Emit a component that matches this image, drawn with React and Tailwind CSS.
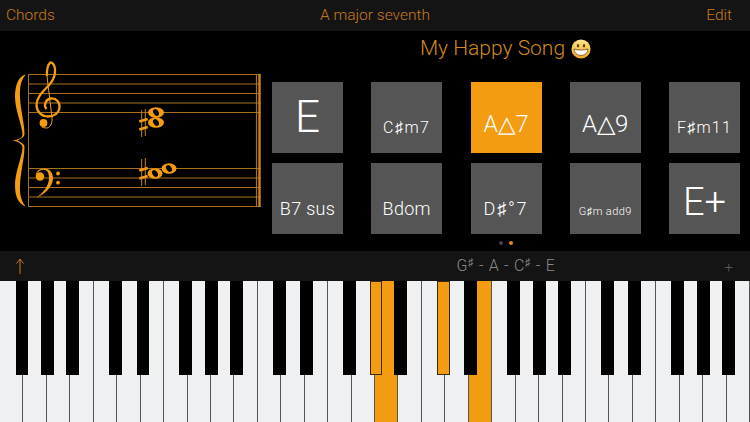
const WHITE_KEYS = Array.from({ length: 32 }, (_, i) => i);
const BLACK_KEYS = [
  [15.5, 0], [41, 0], [66, 0], [109, 0], [136.5, 0], [179, 0], [205, 0], [230, 0], [273, 0], [300, 0], [343, 0],
  [369.5, 1], [394, 0], [437, 1], [464, 0], [507, 0], [533, 0], [558, 0], [601, 0], [628, 0], [671, 0], [697, 0], [722, 0],
];

const CHORDS = [
  { id: 'e', label: 'E', cls: 'text-[44px] pb-[14px]' },
  { id: 'csm7', label: 'C♯m7', cls: 'text-[16px] tracking-[1.500px] pb-[17px]' },
  { id: 'a7', label: 'A△7', cls: 'text-[23px] pb-[17px]', on: true },
  { id: 'a9', label: 'A△9', cls: 'text-[24px] pb-[17px]' },
  { id: 'fsm11', label: 'F♯m11', cls: 'text-[16px] tracking-[1.200px] pb-[17px]' },
  { id: 'b7', label: 'B7 sus', cls: 'text-[18px] tracking-[0.300px] pb-[16px]' },
  { id: 'bdom', label: 'Bdom', cls: 'text-[18px] tracking-[0.300px] pb-[16px]' },
  { id: 'ds7', label: 'D♯°7', cls: 'text-[18px] tracking-[1.800px] pb-[16px]' },
  { id: 'gsm', label: 'G♯m add9', cls: 'text-[11px] tracking-[0.400px] pb-[17px] text-[#d8d8d8]' },
  { id: 'ep', label: 'E+', cls: 'text-[38px] pb-[13px]' },
];

const ORANGE = '#f39c12';

const Sharp = ({ x, y }) => (
  <g transform={`translate(${x} ${y})`} fill="none">
    <path d="M-1.8 -14V13M1.8 -15V12" stroke="#c58319" strokeWidth="1" />
    <path d="M-4.2 -2.400L4.200 -5M-4.200 5.500L4.200 2.900" stroke={ORANGE} strokeWidth="2.600" />
  </g>
);

const Note = ({ x, y, rx = 7.500, ry = 5.200 }) => (
  <g transform={`translate(${x} ${y})`}>
    <ellipse rx={rx} ry={ry} fill={ORANGE} />
    <ellipse rx="2.500" ry="3.700" fill="#000" transform="rotate(-35)" />
  </g>
);

const Staff = () => {
  const lines = [74.500, 84, 93.500, 103, 112.500, 168.500, 178, 187.500, 197, 206.500];
  return (
    <svg width="272" height="170" viewBox="0 50 272 170" className="shrink-0">
      {lines.map((y) => (
        <line key={y} x1="28" x2="261" y1={y} y2={y} stroke="#a9701c" strokeWidth="1.200" />
      ))}
      <line x1="28.500" x2="28.500" y1="74" y2="207" stroke="#a9701c" strokeWidth="1" />
      <line x1="256.500" x2="256.500" y1="74" y2="207" stroke="#a9701c" strokeWidth="1.200" />
      <line x1="259.500" x2="259.500" y1="74" y2="207" stroke="#c98518" strokeWidth="2.400" />
      {/* brace */}
      <path
        d="M26 74.500C19 76 15 84 15 97C15 110 22 125 22.500 134C22.500 138 19 140 12 140.500C19 141.500 22.500 144 22.500 148C22 157 15 172 15 185C15 198 19 204 26 206.500C21.500 202 19.500 195 20 185C20.500 172 24.500 158 24.500 147C24.500 144 21 142 17 140.500C21 139 24.500 137 24.500 134C24.500 123 20.500 110 20 97C19.500 86 21.500 79 26 74.500Z"
        fill={ORANGE}
      />
      {/* treble clef */}
      <path
        d="M46.500 109C43 105 46 99 51 98.500C56.500 98 60 102.500 59.500 107.500C59 113 54 116.500 48 116.500C41 116.500 36.500 111 36.500 105C36.500 96 45 90 50 84C54 79 55.500 74 55 69C54.700 65 52.500 62.500 50.500 62.500C48 64 46.500 70 47 76"
        fill="none"
        stroke={ORANGE}
        strokeWidth="2.300"
      />
      <path
        d="M47 76L52 118C52.500 124 50 128 46 128C44.500 128 43 127.500 42 127"
        fill="none"
        stroke={ORANGE}
        strokeWidth="1"
      />
      <circle cx="43.500" cy="123" r="3.900" fill={ORANGE} />
      {/* bass clef */}
      <path
        d="M35.800 176C35.500 171.500 39.500 168.500 44 168.500C49.500 168.500 53 172.500 53 178C53 186.500 45 194 36 198C43 193 49 186 49 178C49 172.500 47 169.700 43.500 169.700C40 169.700 37 172 35.800 176Z"
        fill={ORANGE}
      />
      <circle cx="40" cy="176.500" r="4.200" fill={ORANGE} />
      <circle cx="58" cy="173.500" r="1.900" fill={ORANGE} />
      <circle cx="58" cy="182.700" r="1.900" fill={ORANGE} />
      <Sharp x={143.500} y={124} />
      <Note x={156} y={112.500} rx={8} />
      <Note x={156} y={122.500} rx={8} />
      <Sharp x={143.500} y={173} />
      <Note x={155} y={173.500} />
      <Note x={169} y={168.500} />
    </svg>
  );
};

const Grin = () => (
  <svg width="20" height="20" viewBox="0 0 22 22" className="ml-[6px]">
    <defs>
      <linearGradient id="face" x1="0" y1="0" x2="0" y2="1">
        <stop offset="0" stopColor="#fde68a" />
        <stop offset="1" stopColor="#eea520" />
      </linearGradient>
    </defs>
    <circle cx="11" cy="11" r="10.500" fill="url(#face)" />
    <ellipse cx="7.700" cy="7.500" rx="1.300" ry="1.900" fill="#5b3a10" />
    <ellipse cx="14.300" cy="7.500" rx="1.300" ry="1.900" fill="#5b3a10" />
    <path d="M3.500 11C7 12.500 15 12.500 18.500 11C18.500 15.500 15 18 11 18C7 18 3.500 15.500 3.500 11Z" fill="#fff" stroke="#5b3a10" strokeWidth="0.800" />
  </svg>
);

const ArrowUp = () => (
  <svg width="10" height="16" viewBox="0 0 10 16" fill="none" stroke="#c77a1c" strokeWidth="1">
    <path d="M5 1V16M1.500 5.500L5 1L8.500 5.500" />
  </svg>
);

export default function App() {
  return (
    <div className="w-[750px] h-[422px] bg-black overflow-hidden flex flex-col font-[family-name:Roboto,sans-serif]">
      <header className="h-[31px] shrink-0 bg-[#141414] grid grid-cols-3 items-center pl-[6px] pr-[18px] text-[15.500px] font-light text-[#c77a1c]">
        <span>Chords</span>
        <span className="text-center pl-[12px]">A major seventh</span>
        <span className="text-right">Edit</span>
      </header>

      <div className="h-[220px] shrink-0 flex">
        <div className="w-[272px] shrink-0 pt-[19px]">
          <Staff />
        </div>
        <div className="flex-1 flex flex-col">
          <div className="h-[51px] shrink-0 flex items-center justify-center pr-[11px] pb-[16px] text-[21px] font-light text-[#d08a1a]">
            My Happy Song
            <Grin />
          </div>
          <div className="w-[468px] grid grid-cols-5 gap-x-[28.300px] gap-y-[10px]">
            {CHORDS.map((c) => (
              <div
                key={c.id}
                className={`w-[71px] h-[71px] flex items-end justify-center font-light text-white ${c.cls} ${c.on ? 'bg-[#f39c12]' : 'bg-[#555555]'}`}
              >
                <span className="leading-none whitespace-nowrap">{c.label}</span>
              </div>
            ))}
          </div>
          <div className="flex justify-center gap-[6.500px] mt-[7px] pr-[10px]">
            <span className="w-[4px] h-[4px] rounded-full bg-[#444444]" />
            <span className="w-[4px] h-[4px] rounded-full bg-[#e8890c]" />
          </div>
        </div>
      </div>

      <div className="h-[30px] shrink-0 bg-[#141414] grid grid-cols-[272px_1fr_40px] items-center">
        <span className="pl-[15px] flex">
          <ArrowUp />
        </span>
        <span className="pl-[30px] text-center text-[16px] tracking-[0.700px] font-light text-[#8a8a8a] whitespace-nowrap">
          G<sup className="text-[11px]">♯</sup> - A - C<sup className="text-[11px]">♯</sup> - E
        </span>
        <span className="text-[15px] font-light text-[#5a5a5a] text-right pr-[17px] pt-[3px]">+</span>
      </div>

      <div className="relative h-[141px] shrink-0 flex bg-[#555555]">
        {WHITE_KEYS.map((i) => (
          <div
            key={i}
            className={`flex-1 border-r border-[#555555] ${i === 16 || i === 20 ? 'bg-[#f39c12]' : 'bg-[#eef0f1]'}`}
          />
        ))}
        {BLACK_KEYS.map(([x, on]) => (
          <div
            key={x}
            style={{ left: x }}
            className={`absolute top-0 w-[12.700px] h-[94px] ${on ? 'bg-[#f39c12] border border-[#3a2a10]' : 'bg-black'}`}
          />
        ))}
      </div>
    </div>
  );
}
